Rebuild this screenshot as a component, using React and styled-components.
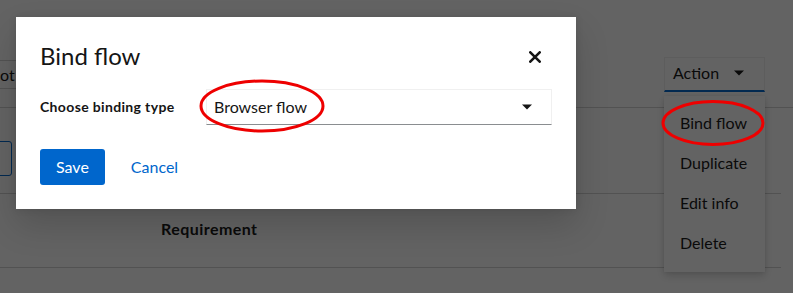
import styled, { createGlobalStyle } from 'styled-components'

const GlobalStyle = createGlobalStyle`
  html, body {
    margin: 0;
    padding: 0;
  }
  body {
    font-family: Lato, "Liberation Sans", sans-serif;
    color: #151515;
  }
`

const Page = styled.div`
  position: relative;
  width: 793px;
  height: 293px;
  overflow: hidden;
  background: #fff;
`

const Toolbar = styled.div`
  display: flex;
  justify-content: space-between;
  align-items: flex-start;
  box-sizing: border-box;
  height: 108px;
  padding: 57px 28px 0 0;
  border-bottom: 1px solid #d2d2d2;
`

const SearchBox = styled.div`
  box-sizing: border-box;
  width: 100px;
  height: 29px;
  margin-top: 3px;
  border-top: 1px solid #d2d2d2;
  border-bottom: 1px solid #d2d2d2;
  font-size: 16px;
  line-height: 27px;
`

const DropdownWrap = styled.div`
  position: relative;
`

const Toggle = styled.div`
  box-sizing: border-box;
  display: flex;
  align-items: center;
  justify-content: space-between;
  width: 101px;
  height: 35px;
  padding: 0 20px 3px 8px;
  border: 1px solid #f0f0f0;
  border-bottom: 2px solid #0066cc;
  font-size: 16px;
`

const Menu = styled.ul`
  position: absolute;
  top: 39px;
  left: 0;
  width: 101px;
  margin: 0;
  padding: 7px 0 9px;
  list-style: none;
  background: #fff;
  box-shadow: 0 4px 8px rgba(3, 3, 3, 0.16), 0 0 4px rgba(3, 3, 3, 0.08);
`

const MenuItem = styled.li`
  height: 40px;
  padding: 0 16px;
  font-size: 16px;
  line-height: 40px;
  white-space: nowrap;
`

const Row = styled.div`
  display: flex;
  align-items: center;
  height: ${(p) => p.h}px;
  margin-right: 12px;
  border-bottom: 1px solid #d2d2d2;
`

const OutlineButton = styled.div`
  box-sizing: border-box;
  width: 72px;
  height: 35px;
  margin: 16px 0 0 -60px;
  border: 1px solid #0066cc;
  border-radius: 3px;
`

const HeaderCell = styled.div`
  padding: 0 0 5px 161px;
  font-size: 16px;
  font-weight: 700;
  letter-spacing: 0.45px;
`

const SmallBox = styled.div`
  width: 118px;
  height: 20px;
  margin: 26px 0 0 182px;
  border: 1px solid #d2d2d2;
`

const Backdrop = styled.div`
  position: absolute;
  inset: 0;
  box-sizing: border-box;
  padding: 17px 0 0 16px;
  background: rgba(3, 3, 3, 0.62);
`

const Modal = styled.div`
  box-sizing: border-box;
  width: 560px;
  padding: 24px;
  background: #fff;
  box-shadow: 0 16px 32px rgba(3, 3, 3, 0.16), 0 0 8px rgba(3, 3, 3, 0.1);
`

const ModalHeader = styled.div`
  display: flex;
  align-items: center;
  justify-content: space-between;
  height: 31px;
`

const Title = styled.h1`
  margin: 0 0 2px;
  font-size: 24px;
  font-weight: 400;
  line-height: 29px;
`

const CloseButton = styled.button`
  display: flex;
  align-items: center;
  justify-content: center;
  width: 34px;
  height: 31px;
  padding: 0;
  border: none;
  background: none;
  color: #151515;
`

const FormRow = styled.div`
  display: grid;
  grid-template-columns: 166px 1fr;
  align-items: center;
  margin-top: 17px;
`

const Label = styled.label`
  padding-bottom: 1px;
  font-size: 14px;
  font-weight: 700;
  letter-spacing: 0.35px;
`

const Select = styled.div`
  box-sizing: border-box;
  display: flex;
  align-items: center;
  justify-content: space-between;
  height: 36px;
  padding: 0 19px 1px 7px;
  border: 1px solid #f0f0f0;
  border-bottom-color: #8a8d90;
  font-size: 16px;
`

const Footer = styled.div`
  display: flex;
  gap: 10px;
  margin-top: 24px;
`

const Button = styled.button`
  height: 36px;
  padding: 0 16px 2px;
  border: none;
  border-radius: 3px;
  font-family: inherit;
  font-size: 16px;
  background: ${(p) => (p.primary ? '#0066cc' : 'transparent')};
  color: ${(p) => (p.primary ? '#fff' : '#0066cc')};
`

const Annotations = styled.svg`
  position: absolute;
  inset: 0;
  pointer-events: none;
`

function Caret() {
  return (
    <svg width="10" height="6" viewBox="0 0 10 6">
      <path d="M0 0.5 H10 L5 5.5 Z" fill="#151515" />
    </svg>
  )
}

function CloseIcon() {
  return (
    <svg width="12" height="12" viewBox="0 0 12 12">
      <path d="M1.3 1.3 L10.7 10.7 M10.7 1.3 L1.3 10.7" stroke="#151515" strokeWidth="2.6" strokeLinecap="round" />
    </svg>
  )
}

export default function App() {
  return (
    <Page>
      <GlobalStyle />
      <Toolbar>
        <SearchBox>ot</SearchBox>
        <DropdownWrap>
          <Toggle>
            Action
            <Caret />
          </Toggle>
          <Menu>
            <MenuItem>Bind flow</MenuItem>
            <MenuItem>Duplicate</MenuItem>
            <MenuItem>Edit info</MenuItem>
            <MenuItem>Delete</MenuItem>
          </Menu>
        </DropdownWrap>
      </Toolbar>
      <Row h={85}>
        <OutlineButton />
      </Row>
      <Row h={73}>
        <HeaderCell>Requirement</HeaderCell>
      </Row>
      <SmallBox />

      <Backdrop>
        <Modal>
          <ModalHeader>
            <Title>Bind flow</Title>
            <CloseButton aria-label="Close">
              <CloseIcon />
            </CloseButton>
          </ModalHeader>
          <FormRow>
            <Label>Choose binding type</Label>
            <Select>
              Browser flow
              <Caret />
            </Select>
          </FormRow>
          <Footer>
            <Button primary>Save</Button>
            <Button>Cancel</Button>
          </Footer>
        </Modal>
      </Backdrop>

      <Annotations width="793" height="293">
        <ellipse cx="262" cy="106" rx="61" ry="25" fill="none" stroke="#ee0000" strokeWidth="3" />
        <ellipse cx="713" cy="123" rx="50" ry="21.5" fill="none" stroke="#ee0000" strokeWidth="3" />
      </Annotations>
    </Page>
  )
}
